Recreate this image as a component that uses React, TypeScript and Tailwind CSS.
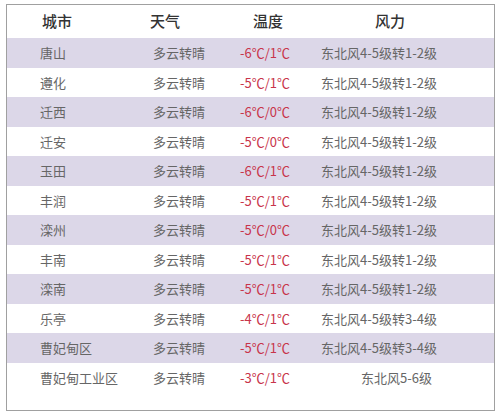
const rows = [
  { city: '唐山', temp: '-6℃/1℃', wind: '东北风4-5级转1-2级' },
  { city: '遵化', temp: '-5℃/1℃', wind: '东北风4-5级转1-2级' },
  { city: '迁西', temp: '-6℃/0℃', wind: '东北风4-5级转1-2级' },
  { city: '迁安', temp: '-5℃/0℃', wind: '东北风4-5级转1-2级' },
  { city: '玉田', temp: '-6℃/1℃', wind: '东北风4-5级转1-2级' },
  { city: '丰润', temp: '-5℃/1℃', wind: '东北风4-5级转1-2级' },
  { city: '滦州', temp: '-5℃/0℃', wind: '东北风4-5级转1-2级' },
  { city: '丰南', temp: '-5℃/1℃', wind: '东北风4-5级转1-2级' },
  { city: '滦南', temp: '-5℃/1℃', wind: '东北风4-5级转1-2级' },
  { city: '乐亭', temp: '-4℃/1℃', wind: '东北风4-5级转3-4级' },
  { city: '曹妃甸区', temp: '-5℃/1℃', wind: '东北风4-5级转3-4级' },
  { city: '曹妃甸工业区', temp: '-3℃/1℃', wind: '东北风5-6级' },
]

export default function App() {
  return (
    <div
      className="w-[500px] h-[415px] bg-white pt-[4px] pl-[6px]"
      style={{ fontFamily: '"Noto Sans CJK SC", "Noto Sans", sans-serif' }}
    >
      <div className="w-[489px] h-[407px] border border-[#a0a0a0] bg-white">
        {/* Header */}
        <div className="flex h-[33px] items-center text-[15px] font-medium text-[#333]">
          <div className="w-[145px] pl-[35px]">城市</div>
          <div className="w-[86px] -ml-[2px]">天气</div>
          <div className="w-[84px] pl-[17px]">温度</div>
          <div className="flex-1 pl-[55px]">风力</div>
        </div>

        {/* Rows */}
        {rows.map((r, i) => (
          <div
            key={r.city}
            className={`flex h-[29.5px] items-center text-[13px] text-[#666] ${
              i % 2 === 0 ? 'bg-[#dcd7e8]' : 'bg-white'
            }`}
          >
            <div className="w-[145px] pl-[33px]">{r.city}</div>
            <div className="w-[87px] pl-[1px]">多云转晴</div>
            <div className="w-[81px] pl-[1px] text-[#c8344a]">{r.temp}</div>
            <div className={`flex-1 ${r.wind.length < 9 ? 'pl-[41px]' : 'pl-[1px]'}`}>{r.wind}</div>
          </div>
        ))}
      </div>
    </div>
  )
}
